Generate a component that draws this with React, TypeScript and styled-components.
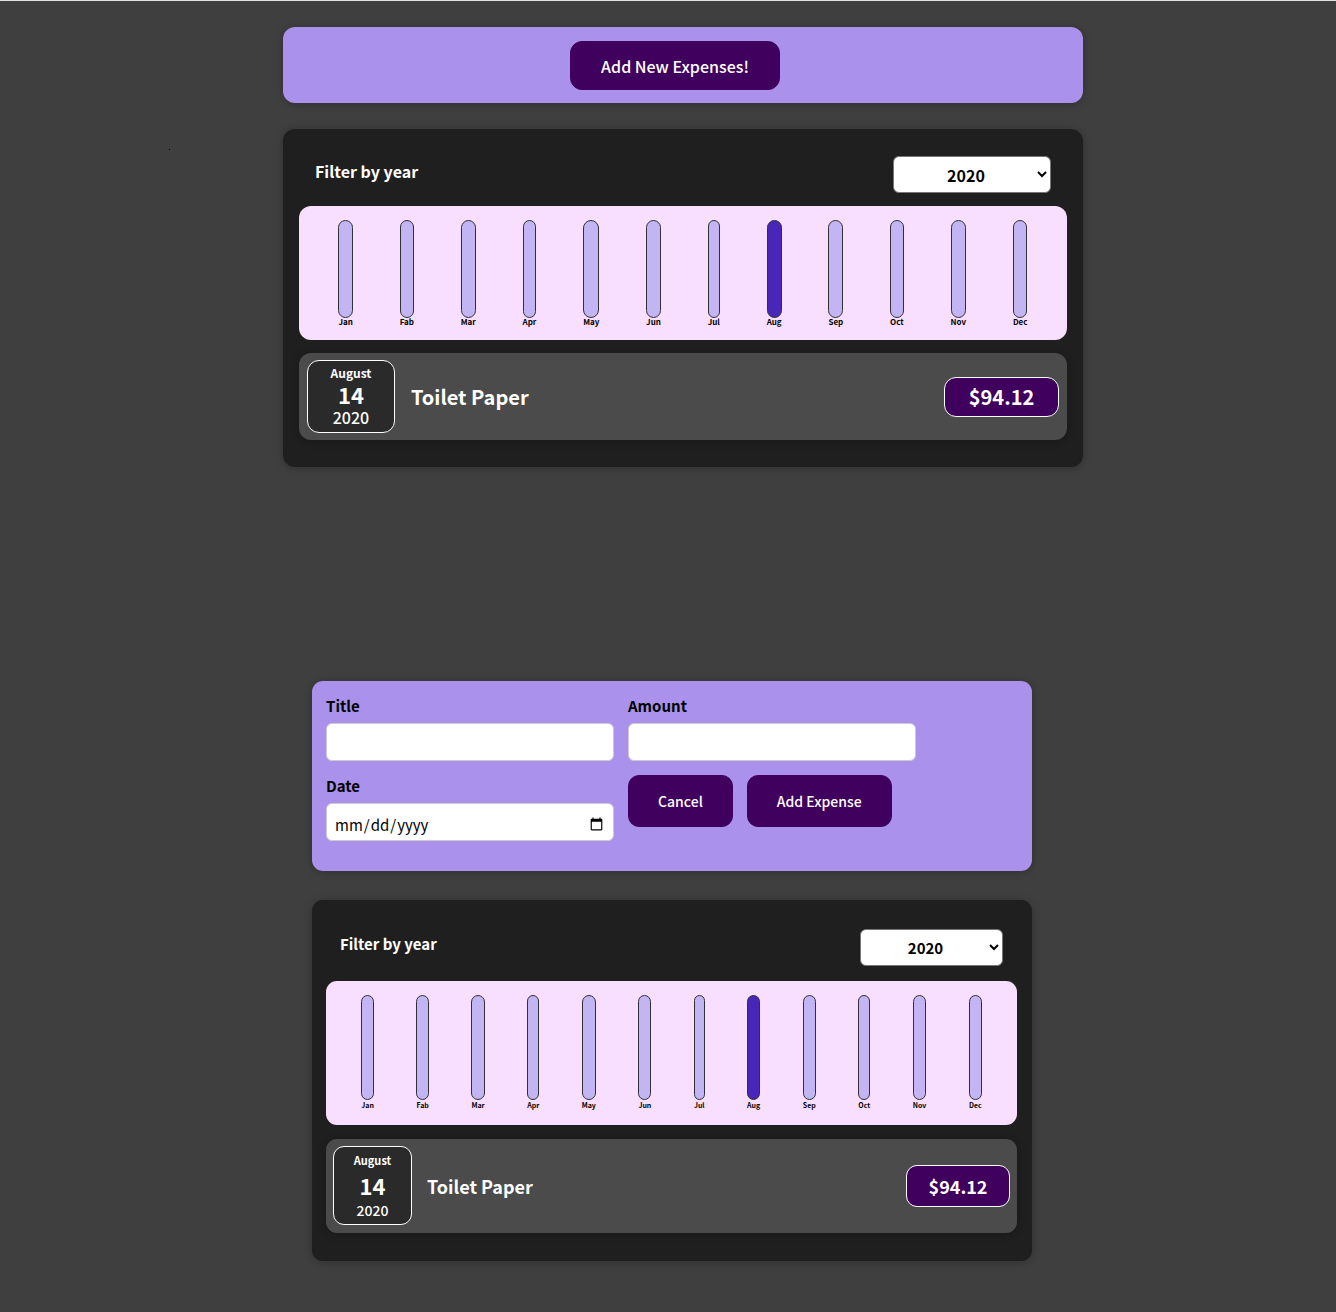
import React, { useState } from "react";
import styled, { createGlobalStyle, ThemeProvider } from "styled-components";

interface Density {
  width: number;
  shift: number;
  gutter: number;
  gutterEnd: number;
  stack: number;
  radius: number;
  cardGap: number;
  cardEnd: number;
  filterTop: number;
  filterText: number;
  filterHeight: number;
  selectWidth: number;
  barHeight: number;
  monthText: number;
  monthLine: number;
  expensePad: string;
  expenseGap: number;
  dateSize: [number, number];
  dateText: [number, number, number];
  dateLine: [number, number, number];
  titleText: number;
  price: [number, number];
  button: { text: number; padX: number; height: number };
}

const roomy: Density = {
  width: 800,
  shift: 30,
  gutter: 16,
  gutterEnd: 16,
  stack: 13,
  radius: 12,
  cardGap: 26,
  cardEnd: 27,
  filterTop: 27,
  filterText: 16,
  filterHeight: 37,
  selectWidth: 158,
  barHeight: 98,
  monthText: 8,
  monthLine: 8,
  expensePad: "7px 8px",
  expenseGap: 16,
  dateSize: [88, 73],
  dateText: [12, 22, 16],
  dateLine: [23, 20, 27],
  titleText: 20,
  price: [115, 40],
  button: { text: 16, padX: 30, height: 49 },
};

const compact: Density = {
  width: 720,
  shift: 8,
  gutter: 14,
  gutterEnd: 15,
  stack: 14,
  radius: 11,
  cardGap: 29,
  cardEnd: 28,
  filterTop: 29,
  filterText: 15,
  filterHeight: 38,
  selectWidth: 143,
  barHeight: 105,
  monthText: 7,
  monthLine: 11,
  expensePad: "7px 7px 8px",
  expenseGap: 15,
  dateSize: [79, 79],
  dateText: [11, 22, 14],
  dateLine: [26, 24, 26],
  titleText: 18,
  price: [104, 42],
  button: { text: 14, padX: 29, height: 52 },
};

const GlobalStyle = createGlobalStyle`
  * { box-sizing: border-box; }
  body {
    margin: 0;
    background: #3f3f3f;
    border-top: 1px solid #dfe3e0;
    font-family: "Noto Sans CJK JP", "Noto Sans", sans-serif;
  }
  h2, p { margin: 0; }
  button, input, select { font: inherit; }
`;

const Page = styled.main`
  display: flex;
  flex-direction: column;
  gap: 214px;
  padding: 26px 0 50px;
`;

const Screen = styled.section<{ theme: Density }>`
  position: relative;
  display: flex;
  flex-direction: column;
  align-items: center;
  gap: ${({ theme }) => theme.cardGap}px;
  padding-left: ${({ theme }) => theme.shift}px;
`;

const Speck = styled.span`
  position: absolute;
  left: 169px;
  top: 122px;
  width: 1px;
  height: 1px;
  background: #000;
`;

const Card = styled.div<{ theme: Density }>`
  width: 100%;
  max-width: ${({ theme }) => theme.width}px;
  border-radius: ${({ theme }) => theme.radius}px;
  box-shadow: 0 1px 8px rgba(0, 0, 0, 0.25);
`;

const Launcher = styled(Card)`
  display: flex;
  justify-content: center;
  padding: 14px 16px 13px 0;
  background: #a991ec;
`;

const FormCard = styled(Card).attrs({ as: "form" })`
  display: flex;
  flex-wrap: wrap;
  align-items: flex-start;
  gap: 14px;
  padding: 14px 14px 30px;
  background: #a991ec;
`;

const Field = styled.label`
  display: flex;
  flex-direction: column;
  gap: 7px;
  width: 288px;
  font-size: 15px;
  line-height: 21px;
  font-weight: 700;
`;

const TextInput = styled.input`
  width: 100%;
  height: 38px;
  padding: 4px 7px 0;
  border: 1px solid #ccc;
  border-radius: 6px;
  background: #fff;
  color: #000;
  font-weight: 400;
`;

const Actions = styled.div`
  display: flex;
  gap: 14px;
`;

const Button = styled.button<{ theme: Density }>`
  height: ${({ theme }) => theme.button.height}px;
  padding: 0 ${({ theme }) => theme.button.padX}px;
  border: 1px solid #40005d;
  border-radius: ${({ theme }) => theme.radius}px;
  background: #40005d;
  color: #fff;
  font-size: ${({ theme }) => theme.button.text}px;
  font-weight: 500;
  cursor: pointer;
`;

const ExpensesCard = styled(Card)`
  display: flex;
  flex-direction: column;
  gap: ${({ theme }) => theme.stack}px;
  padding: ${({ theme }) =>
    `${theme.filterTop}px ${theme.gutterEnd}px ${theme.cardEnd}px ${theme.gutter}px`};
  background: #1f1f1f;
`;

const Filter = styled.label<{ theme: Density }>`
  display: flex;
  align-items: flex-start;
  justify-content: space-between;
  height: ${({ theme }) => theme.filterHeight}px;
  padding: 0 ${({ theme }) => theme.gutter}px;
  color: #fff;
  font-size: ${({ theme }) => theme.filterText}px;
  line-height: 30px;
  font-weight: 700;
`;

const YearSelect = styled.select<{ theme: Density }>`
  width: ${({ theme }) => theme.selectWidth}px;
  height: 37px;
  border: 1px solid #767676;
  border-radius: 6px;
  background: #fff;
  color: #000;
  font-weight: 700;
  text-align: center;
`;

const Chart = styled.div<{ theme: Density }>`
  display: flex;
  justify-content: space-around;
  padding: 14px ${({ theme }) => theme.gutter}px;
  border-radius: ${({ theme }) => theme.radius}px;
  background: #f8dfff;
`;

const Month = styled.div`
  display: flex;
  flex-direction: column;
`;

const Bar = styled.div<{ theme: Density; $active: boolean }>`
  height: ${({ theme }) => theme.barHeight}px;
  border: 1px solid #313131;
  border-radius: 12px;
  background: ${({ $active }) => ($active ? "#4826b9" : "#c3b4f3")};
`;

const MonthName = styled.span<{ theme: Density }>`
  line-height: ${({ theme }) => theme.monthLine}px;
  font-size: ${({ theme }) => theme.monthText}px;
  font-weight: 700;
`;

const Expense = styled.article<{ theme: Density }>`
  display: flex;
  align-items: center;
  gap: ${({ theme }) => theme.expenseGap}px;
  padding: ${({ theme }) => theme.expensePad};
  border-radius: ${({ theme }) => theme.radius}px;
  background: #4b4b4b;
  box-shadow: 0 1px 8px rgba(0, 0, 0, 0.25);
  color: #fff;
`;

const DateBox = styled.time<{ theme: Density }>`
  display: flex;
  flex-direction: column;
  align-items: center;
  width: ${({ theme }) => theme.dateSize[0]}px;
  height: ${({ theme }) => theme.dateSize[1]}px;
  border: 1px solid #fff;
  border-radius: ${({ theme }) => theme.radius}px;
  background: #2a2a2a;
`;

const DatePart = styled.span<{ theme: Density; $part: 0 | 1 | 2 }>`
  font-size: ${({ theme, $part }) => theme.dateText[$part]}px;
  line-height: ${({ theme, $part }) => theme.dateLine[$part]}px;
  font-weight: ${({ $part }) => ($part === 2 ? 500 : 700)};
`;

const ExpenseTitle = styled.h2<{ theme: Density }>`
  flex: 1;
  font-size: ${({ theme }) => theme.titleText}px;
  line-height: 30px;
  font-weight: 700;
`;

const Price = styled.p<{ theme: Density }>`
  display: flex;
  align-items: center;
  justify-content: center;
  width: ${({ theme }) => theme.price[0]}px;
  height: ${({ theme }) => theme.price[1]}px;
  border: 1px solid #fff;
  border-radius: ${({ theme }) => theme.radius}px;
  background: #40005d;
  font-size: ${({ theme }) => theme.titleText}px;
  line-height: 30px;
  font-weight: 700;
`;

const MONTHS = [
  "Jan", "Fab", "Mar", "Apr", "May", "Jun",
  "Jul", "Aug", "Sep", "Oct", "Nov", "Dec",
];

function Expenses() {
  const [year, setYear] = useState("2020");
  return (
    <ExpensesCard>
      <Filter>
        Filter by year
        <YearSelect value={year} onChange={(e) => setYear(e.target.value)}>
          <option value="2022">2022</option>
          <option value="2021">2021</option>
          <option value="2020">2020</option>
          <option value="2019">2019</option>
        </YearSelect>
      </Filter>
      <Chart>
        {MONTHS.map((month) => (
          <Month key={month}>
            <Bar $active={month === "Aug"} />
            <MonthName>{month}</MonthName>
          </Month>
        ))}
      </Chart>
      <Expense>
        <DateBox dateTime="2020-08-14">
          <DatePart $part={0}>August</DatePart>
          <DatePart $part={1}>14</DatePart>
          <DatePart $part={2}>2020</DatePart>
        </DateBox>
        <ExpenseTitle>Toilet Paper</ExpenseTitle>
        <Price>$94.12</Price>
      </Expense>
    </ExpensesCard>
  );
}

export default function App() {
  return (
    <>
      <GlobalStyle />
      <Page>
        <ThemeProvider theme={roomy}>
          <Screen>
            <Speck aria-hidden="true" />
            <Launcher>
              <Button type="button">Add New Expenses!</Button>
            </Launcher>
            <Expenses />
          </Screen>
        </ThemeProvider>
        <ThemeProvider theme={compact}>
          <Screen>
            <FormCard>
              <Field>
                Title
                <TextInput type="text" />
              </Field>
              <Field>
                Amount
                <TextInput type="number" min="0" step="0.01" />
              </Field>
              <Field>
                Date
                <TextInput type="date" />
              </Field>
              <Actions>
                <Button type="button">Cancel</Button>
                <Button type="button">Add Expense</Button>
              </Actions>
            </FormCard>
            <Expenses />
          </Screen>
        </ThemeProvider>
      </Page>
    </>
  );
}
